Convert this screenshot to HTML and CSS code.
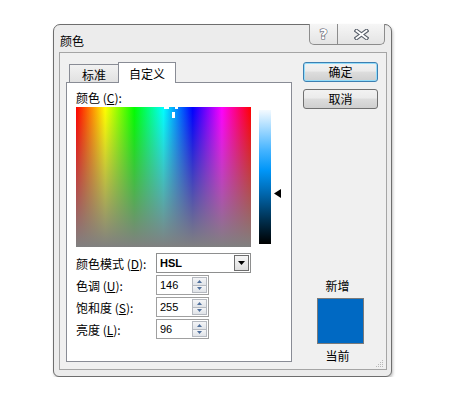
FILE: index.html
```html
<!DOCTYPE html>
<html>
<head>
<meta charset="utf-8">
<link rel="stylesheet" href="styles.css">
</head>
<body>
<div class="window">
  <div class="titlebar">
    <span class="title">颜色</span>
    <div class="caption-btns">
      <div class="cap help"><span class="qmark">?</span></div>
      <div class="cap close">
        <svg width="15" height="11" viewBox="0 0 15 11">
          <path d="M2.5 1.8 L12.5 9.2 M12.5 1.8 L2.5 9.2" stroke="#59606b" stroke-width="4" stroke-linecap="square" fill="none"/>
          <path d="M2.5 1.8 L12.5 9.2 M12.5 1.8 L2.5 9.2" stroke="#ffffff" stroke-width="1.8" stroke-linecap="square" fill="none"/>
        </svg>
      </div>
    </div>
  </div>
  <div class="client">
    <div class="tabctl">
      <div class="tabs">
        <div class="tab">标准</div>
        <div class="tab active">自定义</div>
      </div>
      <div class="panel">
        <div class="lbl">颜色 (<u>C</u>):</div>
        <div class="picker">
          <div class="spectrum">
            <div class="cross">
              <span class="arm h l"></span>
              <span class="arm h r"></span>
              <span class="arm v b"></span>
            </div>
          </div>
          <div class="lumwrap">
            <div class="lum"></div>
            <svg class="marker" width="7" height="9" viewBox="0 0 7 9"><path d="M0 4.5 L7 0 L7 9 Z" fill="#000"/></svg>
          </div>
        </div>
        <div class="rows">
          <div class="rlbl">颜色模式 (<u>D</u>):</div>
          <div class="select"><span class="val">HSL</span><span class="ddbtn"><svg width="7" height="4" viewBox="0 0 7 4"><path d="M0 0 H7 L3.5 4 Z" fill="#000"/></svg></span></div>
          <div class="rlbl">色调 (<u>U</u>):</div>
          <div class="field"><span class="val">146</span><span class="spin"><span class="sb"><svg width="5" height="3" viewBox="0 0 5 3"><path d="M0 3 L2.5 0 L5 3 Z" fill="#4f6f9c"/></svg></span><span class="sb"><svg width="5" height="3" viewBox="0 0 5 3"><path d="M0 0 L5 0 L2.5 3 Z" fill="#4f6f9c"/></svg></span></span></div>
          <div class="rlbl">饱和度 (<u>S</u>):</div>
          <div class="field"><span class="val">255</span><span class="spin"><span class="sb"><svg width="5" height="3" viewBox="0 0 5 3"><path d="M0 3 L2.5 0 L5 3 Z" fill="#4f6f9c"/></svg></span><span class="sb"><svg width="5" height="3" viewBox="0 0 5 3"><path d="M0 0 L5 0 L2.5 3 Z" fill="#4f6f9c"/></svg></span></span></div>
          <div class="rlbl">亮度 (<u>L</u>):</div>
          <div class="field"><span class="val">96</span><span class="spin"><span class="sb"><svg width="5" height="3" viewBox="0 0 5 3"><path d="M0 3 L2.5 0 L5 3 Z" fill="#4f6f9c"/></svg></span><span class="sb"><svg width="5" height="3" viewBox="0 0 5 3"><path d="M0 0 L5 0 L2.5 3 Z" fill="#4f6f9c"/></svg></span></span></div>
        </div>
      </div>
    </div>
    <div class="side">
      <div class="btn default">确定</div>
      <div class="btn">取消</div>
      <div class="preview">
        <div class="plabel">新增</div>
        <div class="swatch"></div>
        <div class="plabel">当前</div>
      </div>
    </div>
    <svg class="grip" width="9" height="9" viewBox="0 0 9 9">
      <g fill="#b8b8b8">
        <rect x="7" y="1" width="1" height="1"/><rect x="5" y="3" width="1" height="1"/><rect x="7" y="3" width="1" height="1"/>
        <rect x="3" y="5" width="1" height="1"/><rect x="5" y="5" width="1" height="1"/><rect x="7" y="5" width="1" height="1"/>
        <rect x="1" y="7" width="1" height="1"/><rect x="3" y="7" width="1" height="1"/><rect x="5" y="7" width="1" height="1"/><rect x="7" y="7" width="1" height="1"/>
      </g>
    </svg>
  </div>
</div>
</body>
</html>
```

FILE: styles.css
```css
* { box-sizing: border-box; }
body {
  margin: 0;
  background: #ffffff;
  font-family: "Noto Sans CJK SC", "Noto Sans", sans-serif;
  font-size: 12px;
  color: #000;
}
.window {
  margin: 24px 0 0 53px;
  width: 339px;
  height: 353px;
  border: 1px solid #6e6e6e;
  border-radius: 7px 7px 6px 6px;
  background: #ececec;
  padding: 0 4px 6px 5px;
  display: flex;
  flex-direction: column;
  box-shadow: 1px 2px 3px rgba(0, 0, 0, 0.25);
}
.titlebar {
  height: 27px;
  flex: none;
  display: flex;
  align-items: flex-start;
}
.title {
  margin: 9px 0 0 1px;
  line-height: 14px;
}
.caption-btns {
  margin: -1px 2px 0 auto;
  display: flex;
}
.cap {
  height: 21px;
  border: 1px solid #8c8c8c;
  border-top: none;
  background: linear-gradient(#f6f6f6, #e4e4e4);
  display: flex;
  align-items: center;
  justify-content: center;
}
.help {
  width: 29px;
  border-radius: 0 0 0 5px;
}
.close {
  width: 47px;
  border-left: none;
  border-radius: 0 0 5px 0;
}
.qmark {
  font-family: "DejaVu Sans", sans-serif;
  font-weight: bold;
  font-size: 14px;
  line-height: 14px;
  color: #ffffff;
  -webkit-text-stroke: 1.2px #59606b;
  paint-order: stroke fill;
}
.client {
  width: 328px;
  height: 318px;
  flex: none;
  border: 1px solid #a5a5a5;
  background: #f0f0f0;
  display: flex;
  padding: 9px 0 0 6px;
  position: relative;
}
.tabctl {
  width: 226px;
  display: flex;
  flex-direction: column;
}
.tabs {
  height: 20px;
  display: flex;
  align-items: flex-end;
  padding-left: 3px;
}
.tab {
  height: 18px;
  width: 50px;
  border: 1px solid #898c95;
  border-bottom: none;
  background: linear-gradient(#f2f2f2, #e1e1e1);
  text-align: center;
  line-height: 16px;
  padding-top: 2px;
}
.tab.active {
  width: 58px;
  height: 21px;
  margin-left: -1px;
  margin-bottom: -1px;
  background: #ffffff;
  position: relative;
  z-index: 1;
  padding-top: 3px;
}
.panel {
  height: 280px;
  border: 1px solid #898c95;
  background: #ffffff;
  padding: 7px 0 0 9px;
}
.lbl {
  line-height: 15px;
  height: 15px;
}
u { text-underline-offset: 1px; }
.picker {
  display: flex;
  margin-top: 2px;
}
.spectrum {
  width: 175px;
  height: 140px;
  position: relative;
  background:
    linear-gradient(to bottom, rgba(128, 128, 128, 0), #808080),
    linear-gradient(to right, #ff0000 0%, #ffff00 16.67%, #00ff00 33.33%, #00ffff 50%, #0000ff 66.67%, #ff00ff 83.33%, #ff0000 100%);
}
.cross {
  position: absolute;
  left: 98px;
  top: 0;
  width: 0;
  height: 0;
}
.arm {
  position: absolute;
  background: #ffffff;
}
.arm.h { height: 2px; width: 5px; top: 0; }
.arm.l { left: -10px; }
.arm.r { left: 1px; width: 3px; }
.arm.v { width: 3px; height: 6px; left: -2px; top: 5px; }
.lumwrap {
  position: relative;
  margin-left: 8px;
  padding-top: 3px;
  width: 24px;
}
.lum {
  width: 12px;
  height: 134px;
  background: linear-gradient(to bottom, #f4faff 0%, #45b4ff 30%, #0096f8 45%, #0068b0 62%, #003050 82%, #000000 100%);
}
.marker {
  position: absolute;
  left: 15px;
  top: 82px;
}
.rows {
  margin-top: 6px;
  display: grid;
  grid-template-columns: 80px auto;
  grid-auto-rows: 20px;
  row-gap: 2px;
  align-items: center;
}
.rlbl {
  line-height: 15px;
}
.select {
  width: 95px;
  height: 20px;
  border: 1px solid #8e8f8f;
  background: #fff;
  display: flex;
  align-items: center;
  padding: 1px 1px 1px 3px;
}
.val {
  font-family: "Liberation Sans", sans-serif;
  font-size: 11px;
  line-height: 14px;
  flex: 1;
}
.select .val { font-weight: bold; }
.ddbtn {
  width: 15px;
  height: 16px;
  border: 1px solid #6d6d6d;
  background: linear-gradient(#f6f6f6, #dedede);
  display: flex;
  align-items: center;
  justify-content: center;
}
.field {
  width: 53px;
  height: 20px;
  border: 1px solid #a0a0a0;
  background: #fff;
  display: flex;
  align-items: center;
  padding: 1px 1px 1px 3px;
}
.spin {
  width: 15px;
  height: 16px;
  display: flex;
  flex-direction: column;
}
.sb {
  flex: 1;
  border: 1px solid #b5b9c0;
  background: linear-gradient(#f4f5f7, #e0e3e8);
  display: flex;
  align-items: center;
  justify-content: center;
}
.sb + .sb { border-top: none; }
.side {
  margin-left: 11px;
  width: 75px;
  display: flex;
  flex-direction: column;
}
.btn {
  height: 20px;
  border: 1px solid #707070;
  border-radius: 3px;
  background: linear-gradient(#f2f2f2 0%, #ebebeb 45%, #dddddd 50%, #cfcfcf 100%);
  text-align: center;
  line-height: 18px;
}
.btn.default {
  border-color: #3c7fb1;
  box-shadow: inset 0 0 0 1px #94dcf9;
}
.btn + .btn { margin-top: 7px; }
.preview {
  margin-top: 169px;
  display: flex;
  flex-direction: column;
  align-items: center;
}
.plabel {
  line-height: 15px;
  padding-right: 6px;
}
.swatch {
  width: 47px;
  height: 46px;
  margin: 5px 0 4px;
  border: 1px solid #7a7a7a;
  background: #0069c3;
}
.grip {
  position: absolute;
  right: 2px;
  bottom: 1px;
}
```
